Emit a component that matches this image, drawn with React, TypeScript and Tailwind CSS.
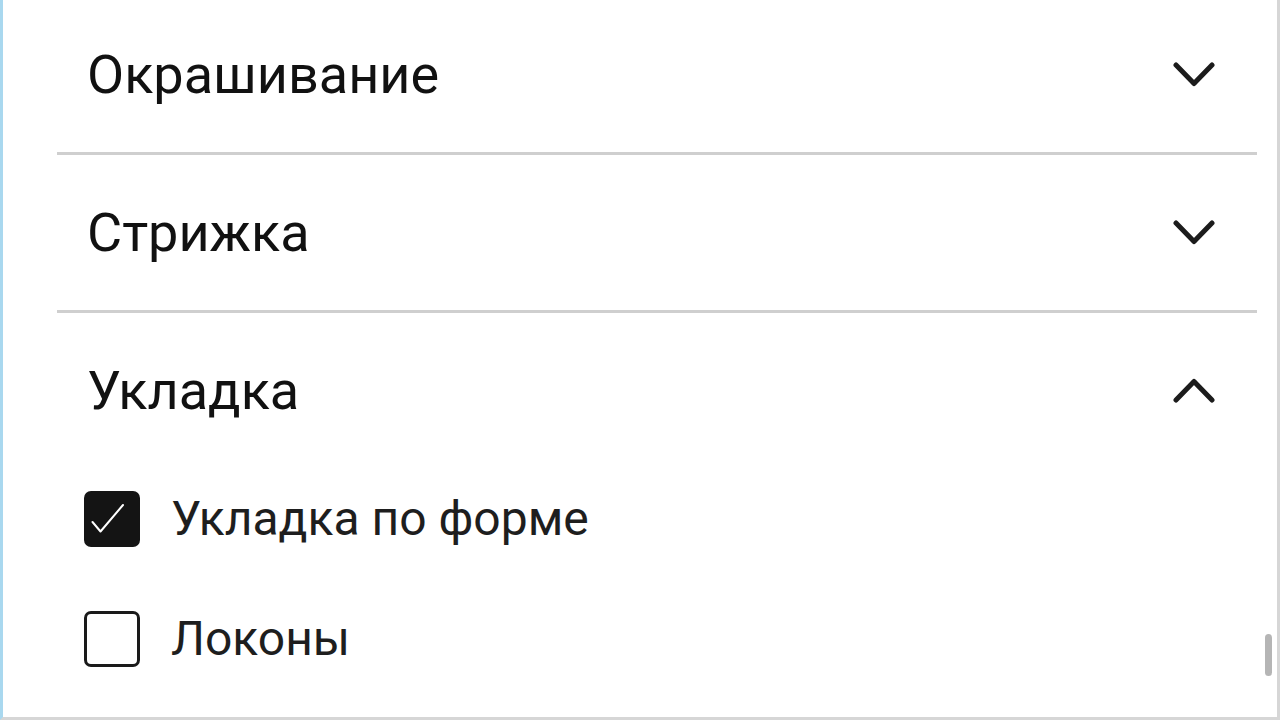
import React, { useState } from 'react'

const Chevron = ({ up }: { up?: boolean }) => (
  <svg width="42" height="25" viewBox="0 0 42 25" fill="none">
    <path
      d={up ? 'M3 22L21 3.5L39 22' : 'M3 3L21 21.5L39 3'}
      stroke="#1c1c1c"
      strokeWidth="5"
      strokeLinecap="round"
      strokeLinejoin="round"
    />
  </svg>
)

const Checkbox = ({ checked }: { checked: boolean }) => (
  <div
    className={
      checked
        ? 'relative h-[56px] w-[56px] shrink-0 rounded-[7px] bg-[#141414]'
        : 'h-[56px] w-[56px] shrink-0 rounded-[7px] border-[3px] border-[#1a1a1a] bg-white'
    }
  >
    {checked && (
      <svg className="absolute inset-0" width="56" height="56" viewBox="0 0 56 56" fill="none">
        <path d="M8.5 31L16.5 40.5L39 14" stroke="white" strokeWidth="2" strokeLinecap="round" strokeLinejoin="round" />
      </svg>
    )}
  </div>
)

const sections = [
  { title: 'Окрашивание', options: [] as string[] },
  { title: 'Стрижка', options: [] as string[] },
  { title: 'Укладка', options: ['Укладка по форме', 'Локоны'] }
]

export default function App() {
  const [open, setOpen] = useState(2)
  const [checked, setChecked] = useState<Record<string, boolean>>({ 'Укладка по форме': true })

  return (
    <div
      className="relative h-[720px] w-full overflow-hidden border-r-[3px] border-b-[3px] border-l-[3px] border-r-[#d6d6d6] border-b-[#d6d6d6] border-l-[#a9d8ef] bg-white"
      style={{ fontFamily: 'Roboto, "Noto Sans", sans-serif' }}
    >
      {/* list is scrolled a few px down */}
      <div className="-mt-[3px] flex flex-col pr-[20px] pl-[54px]">
        {sections.map((s, i) => (
          <div key={s.title} className={i < sections.length - 1 ? 'border-b-[3px] border-[#cfcfcf]' : ''}>
            <button
              className="flex h-[155px] w-full items-center justify-between pr-[42px] pl-[30px] text-left"
              onClick={() => setOpen(open === i ? -1 : i)}
            >
              <span className="text-[54px] leading-none font-normal text-[#111]">{s.title}</span>
              <Chevron up={open === i} />
            </button>
            {open === i && s.options.length > 0 && (
              <div className="mt-[23px] flex flex-col gap-[64px] pl-[27px]">
                {s.options.map((o) => (
                  <label
                    key={o}
                    className="flex cursor-pointer items-center gap-[31px]"
                    onClick={() => setChecked({ ...checked, [o]: !checked[o] })}
                  >
                    <Checkbox checked={!!checked[o]} />
                    <span className="text-[48px] leading-none text-[#1e1e1e]">{o}</span>
                  </label>
                ))}
              </div>
            )}
          </div>
        ))}
      </div>
      <div className="absolute top-[634px] right-[5px] h-[42px] w-[7px] rounded-full bg-[#b5b5b5]" />
    </div>
  )
}
